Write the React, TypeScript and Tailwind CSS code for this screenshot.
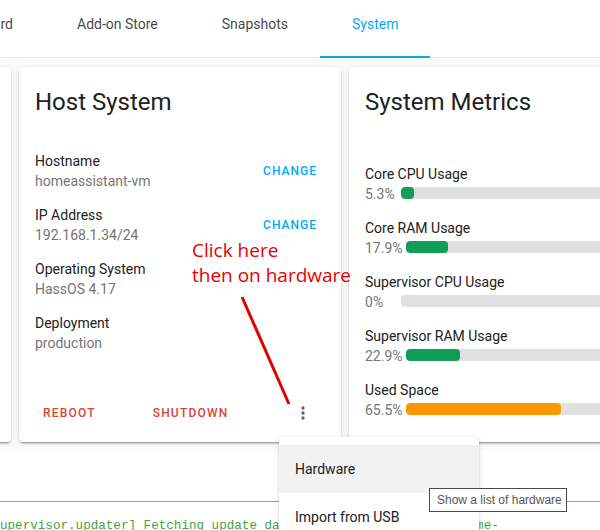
import React from 'react';

const cardShadow =
  'shadow-[0_2px_2px_0_rgba(0,0,0,0.14),0_1px_5px_0_rgba(0,0,0,0.12),0_3px_1px_-2px_rgba(0,0,0,0.2)]';

const hostRows = [
  { label: 'Hostname', value: 'homeassistant-vm', change: true },
  { label: 'IP Address', value: '192.168.1.34/24', change: true },
  { label: 'Operating System', value: 'HassOS 4.17', change: false },
  { label: 'Deployment', value: 'production', change: false },
];

const metrics = [
  { label: 'Core CPU Usage', value: 5.3, color: 'bg-[#0f9d58]' },
  { label: 'Core RAM Usage', value: 17.9, color: 'bg-[#0f9d58]' },
  { label: 'Supervisor CPU Usage', value: 0, color: 'bg-[#0f9d58]' },
  { label: 'Supervisor RAM Usage', value: 22.9, color: 'bg-[#0f9d58]' },
  { label: 'Used Space', value: 65.5, color: 'bg-[#ff9800]' },
];

function DotsIcon() {
  return (
    <svg width="20" height="20" viewBox="0 0 24 24" className="fill-[#616161]">
      <path d="M12,16A2,2 0 0,1 14,18A2,2 0 0,1 12,20A2,2 0 0,1 10,18A2,2 0 0,1 12,16M12,10A2,2 0 0,1 14,12A2,2 0 0,1 12,14A2,2 0 0,1 10,12A2,2 0 0,1 12,10M12,4A2,2 0 0,1 14,6A2,2 0 0,1 12,8A2,2 0 0,1 10,6A2,2 0 0,1 12,4Z" />
    </svg>
  );
}

function Tabs() {
  return (
    <div className="h-[58px] bg-white border-b border-[#e8e8e8] flex text-[14px] leading-[20px] text-[#4a4a4a] shrink-0">
      <div className="w-[45px] overflow-hidden flex justify-end pr-[32px] pt-[14px] whitespace-nowrap">
        Dashboard
      </div>
      <div className="px-[32px] pt-[14px] whitespace-nowrap">Add-on Store</div>
      <div className="px-[32px] pt-[14px] whitespace-nowrap">Snapshots</div>
      <div className="relative px-[32px] pt-[14px] whitespace-nowrap text-[#03a9f4]">
        System
        <div className="absolute left-0 right-0 bottom-[-1px] h-[2px] bg-[#03a9f4]" />
      </div>
    </div>
  );
}

function HostCard() {
  return (
    <div className={`w-[322px] shrink-0 bg-white rounded-[4px] flex flex-col ${cardShadow}`}>
      <h2 className="pt-[19px] px-4 text-[24px] leading-[32px] text-[#212121]">Host System</h2>
      <div className="mt-[33px] px-4 flex flex-col gap-[14px]">
        {hostRows.map((row) => (
          <div key={row.label} className="h-[40px] flex items-center justify-between">
            <div className="text-[14px] leading-[20px]">
              <div className="text-[#212121]">{row.label}</div>
              <div className="text-[#757575]">{row.value}</div>
            </div>
            {row.change && (
              <span className="mr-[8px] text-[12px] font-medium tracking-[1px] text-[#03a9f4]">CHANGE</span>
            )}
          </div>
        ))}
      </div>
      <div className="mt-auto mb-[11px] h-[36px] flex items-center pl-[24px] pr-[28px] text-[12px] font-medium tracking-[1.2px] text-[#db4437]">
        <span>REBOOT</span>
        <span className="ml-[57px]">SHUTDOWN</span>
        <span className="ml-auto flex">
          <DotsIcon />
        </span>
      </div>
    </div>
  );
}

function MetricsCard() {
  return (
    <div className={`w-[310px] shrink-0 bg-white rounded-[4px] ${cardShadow}`}>
      <h2 className="pt-[19px] px-4 text-[24px] leading-[32px] text-[#212121]">System Metrics</h2>
      <div className="mt-[46px] px-4 flex flex-col gap-[14px]">
        {metrics.map((m) => (
          <div key={m.label} className="text-[14px] leading-[20px]">
            <div className="text-[#212121]">{m.label}</div>
            <div className="flex items-start">
              <span className="min-w-[36px] pr-[3px] text-[#757575]">{m.value}%</span>
              <div className="flex-1 h-[12px] mt-[3px] rounded-[4px] bg-[#e0e0e0] overflow-hidden">
                <div className={`h-full rounded-[4px] ${m.color}`} style={{ width: `${m.value}%` }} />
              </div>
            </div>
          </div>
        ))}
      </div>
    </div>
  );
}

export default function App() {
  return (
    <div className="relative w-[600px] h-[530px] overflow-hidden bg-[#fafafa] font-[Roboto,sans-serif]">
      <Tabs />

      <div className="pt-[9px] h-[375px] box-content flex gap-[8px] -ml-[89px]">
        <div className={`w-[100px] shrink-0 bg-white rounded-[4px] ${cardShadow}`} />
        <HostCard />
        <MetricsCard />
      </div>

      <div className="mt-[8px] bg-white h-[120px]">
        <div className="h-[52px] border-b border-[#9e9e9e]" />
        <div className="pt-[15px] font-['Liberation_Mono',monospace] text-[12.6px] leading-[18px] text-[#3fa33f] whitespace-nowrap">
          <div>upervisor.updater] Fetching update data from https://version.home-</div>
          <div>assistant.io/stable.json</div>
        </div>
      </div>

      {/* annotation */}
      <div className="absolute left-[192px] top-[238px] font-['Open_Sans',sans-serif] text-[19px] leading-[25px] text-[#e50000] whitespace-nowrap">
        <div>Click here</div>
        <div>then on hardware</div>
      </div>
      <svg className="absolute left-0 top-0 pointer-events-none" width="600" height="530">
        <line x1="242" y1="297" x2="289" y2="404" stroke="#e00000" strokeWidth="3" />
      </svg>

      {/* overflow menu */}
      <div className={`absolute left-[279px] top-[437px] w-[200px] bg-white rounded-[4px] py-[8px] ${cardShadow}`}>
        <div className="h-[48px] px-4 flex items-center bg-[#f2f2f2] text-[14px] text-[#212121]">Hardware</div>
        <div className="h-[48px] px-4 flex items-center text-[14px] text-[#212121]">Import from USB</div>
      </div>

      {/* tooltip */}
      <div className="absolute left-[429px] top-[488px] w-[138px] h-[24px] bg-white border border-[#4a4a4a] flex items-center pl-[7px] font-['Liberation_Sans',sans-serif] text-[12px] text-[#575757] whitespace-nowrap">
        Show a list of hardware
      </div>
    </div>
  );
}
